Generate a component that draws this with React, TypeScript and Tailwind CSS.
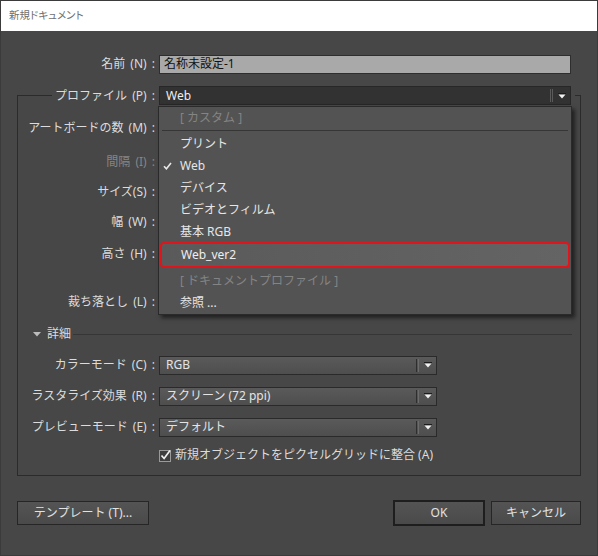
// @ts-nocheck
import React from 'react';

const FONT = "font-['Noto_Sans','Noto_Sans_CJK_JP',sans-serif]";

function Arrow() {
    return (
        <svg width="8" height="6" viewBox="0 0 8 6">
            <rect x="0" y="0" width="8" height="1" fill="#1c1c1c" />
            <path d="M0.5 1.5h7L4 5.5z" fill="#f2f2f2" />
        </svg>
    );
}

function Select({ value, className, dark = false }: { value: string, className: string, dark?: boolean }) {
    return (
        <div className={`flex items-center h-[19px] border ${dark ? 'bg-[#323232] border-[#272727]' : 'bg-gradient-to-b from-[#5a5a5a] to-[#4e4e4e] border-[#2a2a2a]'} ${className}`}>
            <span className={`flex-1 pl-[6px] leading-[16px] ${dark ? 'text-[#eeeeee]' : 'text-[#e4e4e4]'}`}>{value}</span>
            <div className="flex items-center gap-px h-[13px]">
                <div className={`w-px h-full ${dark ? 'bg-[#5a5a5a]' : 'bg-[#2e2e2e]'}`} />
                <div className={`w-px h-full ${dark ? 'bg-[#5a5a5a]' : 'bg-[#6c6c6c]'}`} />
            </div>
            <div className="w-[17px] flex justify-center">
                <Arrow />
            </div>
        </div>
    );
}

function Row({ label, lw, dim = false, className = '', children = null }) {
    return (
        <div className={`flex items-center h-[20px] ${className}`}>
            <div className={`${lw} text-right leading-[16px] whitespace-nowrap [word-spacing:2px] ${dim ? 'text-[#858585]' : 'text-[#dcdcdc]'}`}>{label}</div>
            <div className="ml-[4px] flex items-center">{children}</div>
        </div>
    );
}

function MenuItem({ label, disabled = false, checked = false, className = '' }) {
    return (
        <div className={`flex items-center h-[22px] ${className}`}>
            <div className="w-[21px] pl-[4px] flex items-center">
                {checked && (
                    <svg width="9" height="8" viewBox="0 0 9 8">
                        <path d="M1 4.2l2.4 2.6L8 1" stroke="#e8e8e8" strokeWidth="1.6" fill="none" />
                    </svg>
                )}
            </div>
            <span className={`leading-[16px] ${disabled ? 'text-[#848484]' : 'text-[#e6e6e6]'}`}>{label}</span>
        </div>
    );
}

function Button({ label, className = '' }) {
    return (
        <div className={`flex items-center justify-center bg-gradient-to-b from-[#545454] to-[#4a4a4a] text-[#e2e2e2] leading-[16px] ${className}`}>
            {label}
        </div>
    );
}

export default function App() {
    return (
        <div className={`${FONT} text-[12px] w-[598px] h-[556px] flex flex-col border border-[#3b3b3b] bg-[#474747] overflow-hidden`}>
            {/* title bar */}
            <div className="h-[30px] bg-white flex items-center pl-[8px] text-[10.5px] text-[#707070] [font-feature-settings:'palt']">
                新規ドキュメント
            </div>

            <div className="flex flex-col">
                <Row label="名前 (N) :" lw="w-[154px]" className="mt-[23px] h-[19px]">
                    <div className="w-[412px] h-[19px] bg-[#a9a9a9] border border-[#2e2e2e] flex items-center pl-[4px] text-[#111111] leading-[16px]">
                        名称未設定-1
                    </div>
                </Row>

                {/* profile row sits on the group frame */}
                <div className="relative z-10 flex items-center h-[19px] mt-[12px]">
                    <div className="w-[154px] flex justify-end">
                        <span className="bg-[#474747] pl-[3px] text-[#dcdcdc] leading-[16px] [word-spacing:2px]">プロファイル (P) :</span>
                    </div>
                    <div className="w-[4px] h-[19px] bg-[#474747]" />
                    <div className="relative">
                        <Select value="Web" dark className="w-[412px]" />
                        <div className="absolute left-[-1px] top-[20px] w-[414px] bg-[#535353] border border-[#2a2a2a] shadow-[3px_3px_4px_rgba(0,0,0,0.55)] flex flex-col">
                            <MenuItem label="[ カスタム ]" disabled />
                            <div className="mt-[1px] mb-[2px] mx-[3px] h-px bg-[#363636]" />
                            <MenuItem label="プリント" />
                            <MenuItem label="Web" checked />
                            <MenuItem label="デバイス" />
                            <MenuItem label="ビデオとフィルム" />
                            <MenuItem label="基本 RGB" />
                            <div className="mt-[-1px] mx-[1px] h-[26px] border-2 border-[#e0141a] rounded-[4px] bg-gradient-to-r from-[#5a5a5a] to-[#646464] flex items-center pl-[19px]">
                                <span className="leading-[16px] text-[#eeeeee]">Web_ver2</span>
                            </div>
                            <MenuItem label="[ ドキュメントプロファイル ]" disabled className="mt-[2px]" />
                            <MenuItem label="参照 ..." className="h-[21px]" />
                        </div>
                    </div>
                    <div className="w-[4px] h-[19px] bg-[#474747]" />
                </div>

                {/* group frame */}
                <div className="mt-[-10px] mx-[16px] border border-[#2b2b2b] flex flex-col pb-[10px]">
                    <Row label="アートボードの数 (M) :" lw="w-[137px]" className="mt-[22px]" />
                    <Row label="間隔 (I) :" lw="w-[137px]" dim className="mt-[14px]" />
                    <Row label="サイズ(S) :" lw="w-[137px]" className="mt-[10px]" />
                    <Row label="幅 (W) :" lw="w-[137px]" className="mt-[10px]" />
                    <Row label="高さ (H) :" lw="w-[137px]" className="mt-[12px]" />
                    <Row label="裁ち落とし (L) :" lw="w-[137px]" className="mt-[28px]" />

                    <div className="flex items-center h-[20px] mt-[12px] pl-[15px] pr-[8px]">
                        <svg width="8" height="5" viewBox="0 0 8 5">
                            <path d="M0 0h8L4 4.5z" fill="#bdbdbd" />
                        </svg>
                        <span className="ml-[6px] text-[#dcdcdc] leading-[16px]">詳細</span>
                        <div className="ml-[2px] flex-1 h-px bg-[#363636]" />
                    </div>

                    <Row label="カラーモード (C) :" lw="w-[137px]" className="mt-[11px]">
                        <Select value="RGB" className="w-[278px]" />
                    </Row>
                    <Row label="ラスタライズ効果 (R) :" lw="w-[137px]" className="mt-[11px]">
                        <Select value="スクリーン (72 ppi)" className="w-[278px]" />
                    </Row>
                    <Row label="プレビューモード (E) :" lw="w-[137px]" className="mt-[11px]">
                        <Select value="デフォルト" className="w-[278px]" />
                    </Row>

                    <div className="flex items-center h-[20px] mt-[8px] pl-[141px]">
                        <svg width="13" height="13" viewBox="0 0 13 13">
                            <rect x="0.5" y="1.5" width="11" height="11" fill="#3e3e3e" stroke="#9a9a9a" />
                            <path d="M2.5 6.5l2.6 3L11 1.5" stroke="#f0f0f0" strokeWidth="1.7" fill="none" />
                        </svg>
                        <span className="ml-[3px] text-[#dcdcdc] leading-[16px]">新規オブジェクトをピクセルグリッドに整合 (A)</span>
                    </div>
                </div>

                {/* buttons */}
                <div className="mt-[24px] px-[16px] flex items-center justify-between">
                    <Button label="テンプレート (T)..." className="w-[132px] h-[24px] border border-[#262626]" />
                    <div className="flex items-center gap-[6px]">
                        <Button label="OK" className="w-[92px] h-[26px] border-2 border-[#1e1e1e]" />
                        <Button label="キャンセル" className="w-[90px] h-[24px] border border-[#262626]" />
                    </div>
                </div>
            </div>
        </div>
    );
}
